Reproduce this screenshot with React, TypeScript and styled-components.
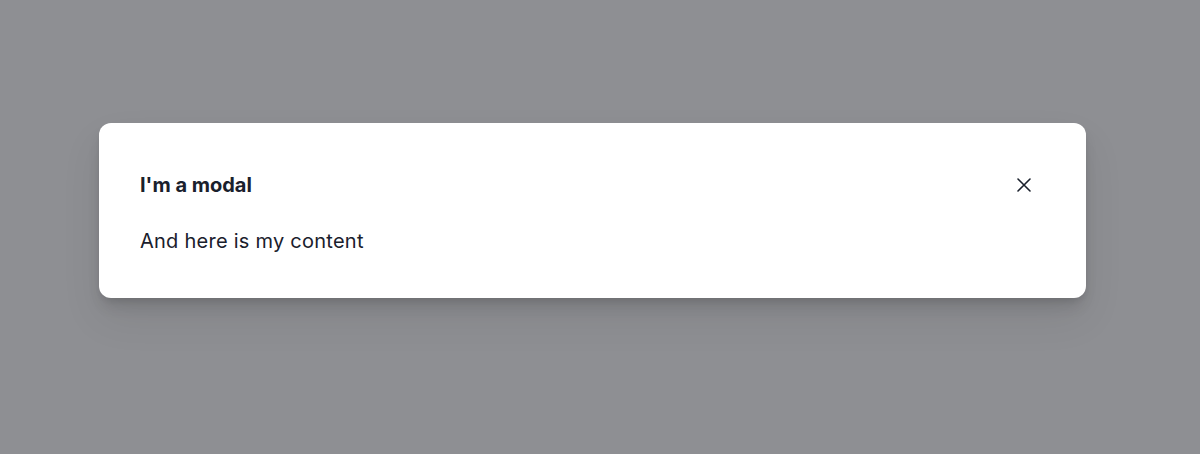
import React from 'react';
import styled, { createGlobalStyle } from 'styled-components';

const GlobalStyle = createGlobalStyle`
  html, body {
    margin: 0;
    padding: 0;
    background-color: #8e8f93;
    font-family: Inter, "Noto Sans", sans-serif;
  }
`;

// 전체 화면 오버레이
const Overlay = styled.div`
  width: 100vw;
  height: 454px;
  box-sizing: border-box;
  padding: 123px 0 0 99px;
`;

const Dialog = styled.section`
  width: 987px;
  height: 175px;
  box-sizing: border-box;
  background-color: #ffffff;
  border-radius: 12px;
  box-shadow: 0 10px 15px -3px rgba(0, 0, 0, 0.12), 0 4px 6px -2px rgba(0, 0, 0, 0.08),
    0 20px 40px rgba(0, 0, 0, 0.08);
  padding: 46px 46px 0 41px;
  color: #1a202c;
`;

const Header = styled.header`
  display: flex;
  align-items: center;
  justify-content: space-between;
  height: 32px;
`;

const Title = styled.h2`
  margin: 0;
  font-size: 20px;
  font-weight: 700;
  line-height: 28px;
`;

const CloseButton = styled.button`
  width: 32px;
  height: 32px;
  display: flex;
  align-items: center;
  justify-content: center;
  border: none;
  background: transparent;
  border-radius: 6px;
  padding: 0;
  color: #1a202c;
  cursor: pointer;
`;

const Body = styled.div`
  margin-top: 26px;
  font-size: 20px;
  line-height: 28px;
  letter-spacing: 0.25px;
`;

const CloseIcon = () => (
  <svg width="14" height="14" viewBox="0 0 14 14" fill="none">
    <path d="M1 1L13 13M13 1L1 13" stroke="currentColor" strokeWidth="1.6" strokeLinecap="round" />
  </svg>
);

const App: React.FC = () => (
  <>
    <GlobalStyle />
    <Overlay>
      <Dialog>
        <Header>
          <Title>I'm a modal</Title>
          <CloseButton aria-label="Close">
            <CloseIcon />
          </CloseButton>
        </Header>
        <Body>And here is my content</Body>
      </Dialog>
    </Overlay>
  </>
);

export default App;
